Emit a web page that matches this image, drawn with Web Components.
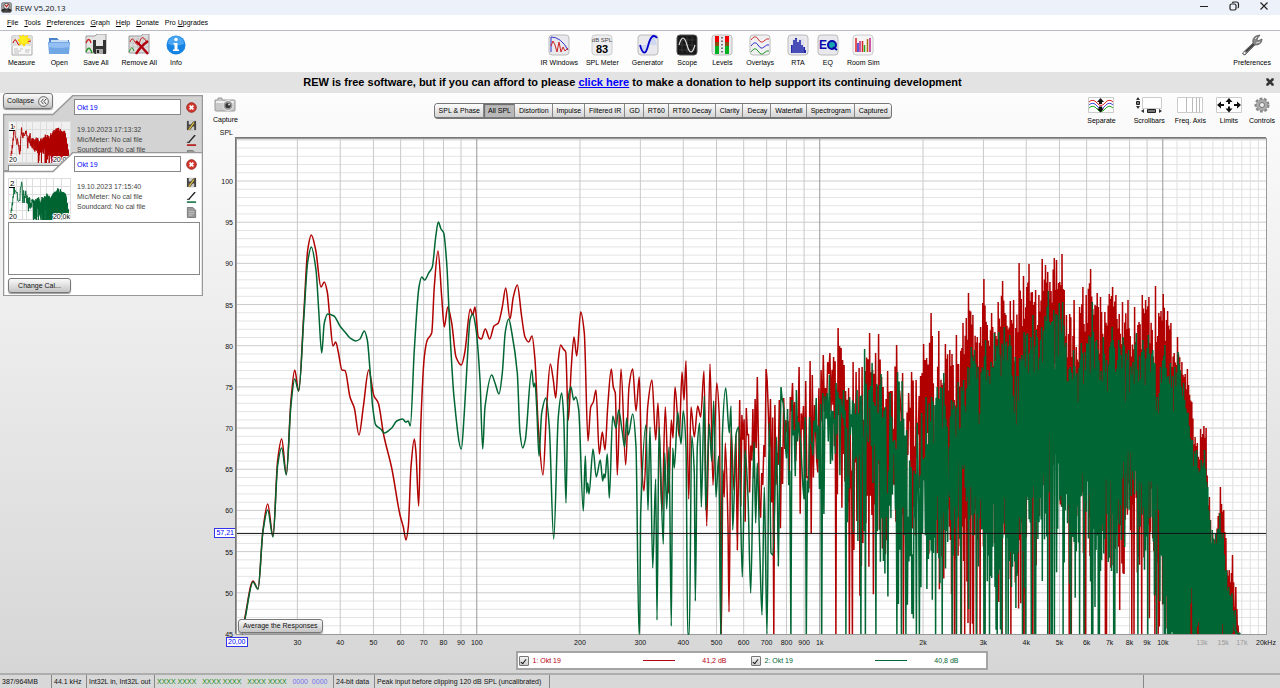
<!DOCTYPE html>
<html lang="en">
  <head>
    <meta charset="UTF-8" />
    <meta name="viewport" content="width=device-width, initial-scale=1.0" />
    <title>REW V5.20.13</title>
    <style>
      html,
      body {
        height: 100%;
        margin: 0;
      }

      body {
        font: 7px/10px "Liberation Sans", Arial, sans-serif;
        color: #111;
        overflow: hidden;
      }
    </style>
  </head>
  <body>
    <rew-app></rew-app>

    <script>
      const ICONS = {
        app: [16, 16, `<rect x="1" y="1" width="14" height="14" rx="2" fill="#aaa" stroke="#555"/><path d="M2 10h12v5H2z" fill="#444"/><circle cx="8" cy="6" r="4" fill="#eee" stroke="#333"/><path d="M6 4l2 3 3-4" fill="none" stroke="#b11" stroke-width="1.500"/><path d="M1 13l5-3M15 13l-5-3" stroke="#222" stroke-width="2"/>`],
        min: [12, 12, `<path d="M2 6.500h8" stroke="#222" fill="none"/>`],
        restore: [12, 12, `<rect x="2" y="4" width="6" height="6" rx="1.500" fill="none" stroke="#222" stroke-width="1.200"/><path d="M4.500 3q0-1 1.500-1h2.500q2 0 2 2v2.500q0 1.500-1 1.500" fill="none" stroke="#222" stroke-width="1.200"/>`],
        close: [12, 12, `<path d="M2.500 2.500l7 7M9.500 2.500l-7 7" stroke="#222" stroke-width="1.200"/>`],
        measure: [22, 22, `<path d="M1 2h20v19H1z" fill="#f7f7f7" stroke="#aaa"/><path d="M1 2h20v10H1z" fill="#ddd"/><path d="M1 7h20M6 2v10M11 2v10M16 2v10" stroke="#fff" stroke-width=".6"/><path d="M2 9q2-6 4-1t3 2 3-2 4 0 4-1" fill="none" stroke="#c00"/><path d="M3 15h4M9 15h3M3 17h7M3 19h5M14 16h5M14 18h4" stroke="#aaa" stroke-width=".7"/><path d="M12 0l1.500 2.500L17 1l-.5 3 3.500 1-3 2 1.500 3-3.500-.5L13 13l-2-3-3 1.500.5-3.500L6 6l3-1.500L8 1l3 1.500z" fill="#ffd900"/><circle cx="12.500" cy="6" r="4" fill="#ffee20"/>`],
        open: [22, 22, `<path d="M1 4h8l2 2h10v13H1z" fill="#4b82c8"/><path d="M3 6h17v6H3z" fill="#c7dcf5"/><path d="M0 8h22l-1 12H1z" fill="#72a7e6"/><path d="M1 9h20v4Q12 15 1 13z" fill="#94bff2"/>`],
        saveall: [22, 22, `<path d="M1 2h9l2-2h9v19H1z" fill="#e4e4e4" stroke="#999"/><path d="M1 9q3-7 5 0" fill="none" stroke="#c22" stroke-width="1.300"/><path d="M1 18q3-8 6 1" fill="none" stroke="#292" stroke-width="1.300"/><path d="M8 6h13v14H10l-2-2z" fill="#333"/><path d="M11 6h7v6h-7z" fill="#e8e8e8"/><path d="M11 15h7v5h-7z" fill="#aaa"/><path d="M12 16h2v3h-2z" fill="#222"/>`],
        removeall: [22, 22, `<path d="M1 2h12l2-2h6v19H1z" fill="#dedede" stroke="#999"/><path d="M1 5h20M1 9h20M1 13h20M5 2v16M10 2v16M15 2v16" stroke="#b5b5b5" stroke-width=".6"/><path d="M2 8q2-6 5 0t5-1 6 0" fill="none" stroke="#c22"/><path d="M1 18q3-8 5-1" fill="none" stroke="#292"/><path d="M8 7Q14 13 20 20M20 7Q12 13 8 20" stroke="#b00010" stroke-width="2.400" fill="none"/>`],
        info: [22, 22, `<circle cx="11" cy="11" r="9.500" fill="#1684e2"/><path d="M3 10a8 8 0 0 1 16 0q-8 3-16 0" fill="#4aa5f2"/><circle cx="11" cy="5.500" r="1.700" fill="#fff"/><path d="M8.500 9h4v6.500h1.500v1.500H8v-1.500h1.500v-5h-1z" fill="#fff"/>`],
        ir: [22, 22, `<rect x="1" y="1" width="20" height="20" rx="3" fill="#e9e9ed" stroke="#bbb"/><path d="M3 18V3q10 0 17 13" fill="none" stroke="#33c"/><path d="M3 12l2-5 2 4 2 7 2-10 2 10 2-5 2 4 3-3" fill="none" stroke="#c22"/>`],
        spl: [22, 22, `<rect x="1" y="1" width="20" height="20" rx="3" fill="#eeeef0" stroke="#ccc"/><text x="11" y="8" font-size="6" text-anchor="middle" fill="#444">dB SPL</text><text x="11" y="19" font-size="11" font-weight="bold" text-anchor="middle" fill="#000">83</text>`],
        generator: [22, 22, `<rect x="1" y="1" width="20" height="20" rx="3" fill="#e9e9ed" stroke="#bbb"/><path d="M3 11h17q-4-17-8 0-4 14-9 0" fill="#cfd6ef"/><path d="M3 11c3 11 6 9 8 1s5-13 9-8" fill="none" stroke="#00c" stroke-width="1.800"/>`],
        scope: [22, 22, `<rect x="1" y="1" width="20" height="20" rx="3" fill="#181818" stroke="#555"/><path d="M3 6h16M3 11h16M3 16h16M6 3v16M11 3v16M16 3v16" stroke="#444" stroke-width=".7"/><path d="M3 11q4-14 8 0t8 0" fill="none" stroke="#ddd" stroke-width="1.200"/>`],
        levels: [22, 22, `<rect x="1" y="1" width="20" height="20" rx="3" fill="#e9e9ed" stroke="#bbb"/><path d="M4 2h4v6H4zM14 2h4v6h-4z" fill="#e00"/><path d="M4 8h4v4H4zM14 8h4v4h-4z" fill="#884a10"/><path d="M4 12h4v8H4zM14 12h4v8h-4z" fill="#00b020"/><path d="M11 3v17" stroke="#777" stroke-width="2" stroke-dasharray="1.500 2"/>`],
        overlays: [22, 22, `<rect x="1" y="1" width="20" height="20" rx="3" fill="#f0f0f2" stroke="#bbb"/><path d="M2 6q4-6 7-1t6 2 5-2" fill="none" stroke="#c33"/><path d="M2 12q4-6 7-1t6 2 5-2" fill="none" stroke="#33c"/><path d="M2 18q4-6 7-1t6 2 5-2" fill="none" stroke="#292"/>`],
        rta: [22, 22, `<rect x="1" y="1" width="20" height="20" rx="3" fill="#e9e9ed" stroke="#bbb"/><path d="M4 19v-8h2V6h2V4h2v4h2V6h2v5h2v2h2v3h1v3z" fill="#2528a8"/><path d="M6 5v14M8 5v14M10 5v14M12 5v14M14 5v14M16 5v14" stroke="#b8bce8" stroke-width=".5"/>`],
        eq: [22, 22, `<rect x="1" y="1" width="20" height="20" rx="3" fill="#e9e9ed" stroke="#bbb"/><text x="2" y="15" font-size="12" font-weight="bold" fill="#0a0aae">E</text><circle cx="15" cy="11" r="4" fill="#16a7b0" stroke="#0a0aae" stroke-width="2"/><path d="M16 13l4 3" stroke="#0a0aae" stroke-width="2"/>`],
        room: [22, 22, `<rect x="1" y="1" width="20" height="20" rx="3" fill="#f5f5f5" stroke="#ccc"/><path d="M4 4v14M10.500 7v11" stroke="#d22" stroke-width="1.500"/><path d="M6 9v9" stroke="#2828d0" stroke-width="1.500"/><path d="M8 7v11M18 4v14" stroke="#c0208a" stroke-width="1.500"/><path d="M12.500 11v7" stroke="#2a2" stroke-width="1.500"/><path d="M15.500 5v13" stroke="#b06c10" stroke-width="1.500"/>`],
        wrench: [22, 22, `<path d="M1.500 19L12 9q-1-5 3-7l4-1-3 4 1 2 4-2q0 6-7 6L4 21q-2 0-2.500-2z" fill="#888" stroke="#555" stroke-width=".8"/><path d="M5 17.500L13 10" stroke="#333" stroke-width="1.500"/><path d="M14 5l2-2M15 9l4-1" stroke="#ddd"/><circle cx="3.500" cy="19" r="1" fill="#fff"/>`],
        camera: [22, 15, `<path d="M1 3h3V1h4v2h12q1 0 1 1v9q0 1-1 1H2q-1 0-1-1z" fill="#c9c9c9" stroke="#999"/><path d="M2 4h18v2H2z" fill="#eee"/><circle cx="14" cy="8.500" r="5" fill="#999" stroke="#eee"/><circle cx="14" cy="8.500" r="2.600" fill="#333"/><circle cx="15" cy="7.500" r="1" fill="#ddd"/>`],
        separate: [26, 16, `<path d="M.5.5h25v15H.5z" fill="#fff" stroke="#ccc"/><path d="M1 5q4-4 8 1t8 0 8-1" fill="none" stroke="#d22"/><path d="M1 8q4-4 8 1t8 0 8-1" fill="none" stroke="#44d"/><path d="M1 11q4-4 8 1t8 0 8-1" fill="none" stroke="#2a2"/><path d="M12.500 1l3.500 4h-2v2h-3V5H9zM12.500 15.500l3.500-4h-2v-2h-3v2H9z" fill="#111"/>`],
        scrollbars: [26, 16, `<path d="M6.500.5h19v11h-19z" fill="#fff" stroke="#ccc"/><path d="M0 3l2-3 2 3zM0 9l2 3 2-3zM8 12v4l-3-2zM23 12v4l3-2z" fill="#333"/><path d="M.5 4.500h3v3h-3zM11.500 12.500h8v3h-8z" fill="#777" stroke="#222"/>`],
        freq: [26, 16, `<path d="M.5.5h25v15H.5z" fill="#fff" stroke="#ccc"/><path d="M9.500 1v14M15.500 1v14M19.500 1v14M22.500 1v14" stroke="#bbb"/>`],
        limits: [26, 16, `<path d="M.5.5h25v15H.5z" fill="#fff" stroke="#ccc"/><path d="M13 1l3.500 4H14v2h-2V5H9.500zM13 15.500l3.500-4H14v-2h-2v2H9.500zM1 8l4-3.500V7h3v2H5v2.500zM25 8l-4-3.500V7h-3v2h3v2.500z" fill="#111"/>`],
        gear: [18, 16, `<circle cx="9" cy="8" r="6" fill="#999" stroke="#888" stroke-width="3" stroke-dasharray="2.700 1.500"/><circle cx="9" cy="8" r="5.500" fill="#aaa"/><circle cx="9" cy="8" r="2.500" fill="#eee" stroke="#777"/>`],
        cross: [10, 10, `<path d="M2 2l6 6M8 2l-6 6" stroke="#333" stroke-width="2.600"/><path d="M1 2h2M7 2h2M1 8h2M7 8h2" stroke="#333"/>`],
        remove: [12, 12, `<circle cx="6" cy="6" r="5.200" fill="#d43a30" stroke="#961a14"/><path d="M4 4l4 4M8 4l-4 4" stroke="#fff" stroke-width="2"/>`],
        save: [12, 12, `<path d="M1 1h10v10H1z" fill="#444"/><path d="M3 1h6v4H3zM3 7h6v4H3z" fill="#ccc"/><path d="M2 10l6-8 2 1-6 8" fill="#d8b840" stroke="#222" stroke-width=".7"/>`],
        colour: [12, 12, `<path d="M3 8l7-8" stroke="#222" stroke-width="1.500"/><path d="M1 8h3" stroke="#222"/><path d="M1 11h10" stroke="var(--trace)" stroke-width="1.600"/>`],
        notes: [12, 12, `<path d="M1.500.5h6l3 3v8h-9z" fill="#999" stroke="#777"/><path d="M3 5h6M3 7h6M3 9h4" stroke="#ccc" stroke-width=".8"/>`],
        chevrons: [12, 12, `<circle cx="6" cy="6" r="5.300" fill="#f4f4f4" stroke="#444" stroke-width=".9"/><path d="M6 3L3.500 6 6 9M9 3L6.500 6 9 9" fill="none" stroke="#333"/>`],
      };

      // Trace vertices on the 1029 x 495 plot, whose origin is 237,139
      const RED_LOW = [
        242,634, 245,617, 253,581, 258,589, 263,530, 267.7,504, 273,536, 277.7,460, 281.7,439, 286.3,474, 291,400,
        294.7,370, 298.7,391, 304,310, 307.7,250, 311.3,235, 315.7,250, 321,287, 324.3,282, 327.3,292, 330,320,
        333,346, 335.7,342, 338.3,352, 342,370, 345,370.5, 350,397, 354.3,408, 359,435, 363.3,407, 368.7,370,
        374,396, 378.3,403, 383.7,435, 391.7,468, 400,515, 403.3,527, 406,540, 408.3,527, 411,467, 414.3,439,
        416,453, 418.7,506, 420.7,427, 424.3,357, 427.3,340, 431.7,333, 434.3,287, 438,251, 441.7,297, 444.3,327,
        447.7,307, 451.7,323, 456,357, 461.3,365, 464.7,353, 470.3,309, 472.7,315, 475,307, 478.3,337, 481.3,339,
        485.3,329, 489.7,339, 494,326, 498.3,323, 502.3,307, 505.7,288, 510,319, 513.3,297, 517.3,285, 521.7,317,
        525,337, 528.7,342, 532,336, 535,360, 538.3,427, 543,475, 546.7,407, 550.3,364, 553.3,380, 555.7,398,
        558.3,360, 560.7,345, 563.3,349, 565.7,352, 568.3,420, 571.3,367, 574,337, 576.7,356, 580.7,312, 584.3,333,
        588,441, 590.7,407, 593.3,402, 596,390, 599.3,454, 602.3,432, 605,450, 607.7,407, 611.3,369, 613.3,387,
        615.3,393, 617.3,475, 621,369, 625.7,465, 629,387, 632.7,369, 636,411, 639.3,377, 641.7,467, 644,491,
        647.7,407, 652,380, 655.7,440, 658,403, 662,511, 665.3,407, 668.7,493, 671.3,420, 673,438, 675,387,
        679.3,437, 682,372, 684,400, 686,361, 688.7,499, 691,407, 694.3,437, 697.7,406, 700.7,417, 704,371,
        706.7,526, 710,364, 713,485, 716.7,383, 719.3,417, 721.3,634, 723,470, 724.3,497, 725.3,443, 728,526,
        729,612, 731,430, 734,490, 736,435, 737.3,550,
      ];
      const GREEN_LOW = [
        242,634, 245,619, 253,582, 258,589, 263,531, 267.7,510, 273,537, 277.7,465, 281.7,448, 286.3,475, 291,405,
        294.7,379, 298.7,391, 304,315, 307.7,262, 311.3,247, 316,270, 318.7,310, 321.7,353, 324.3,323, 327.7,314,
        334,316, 340,326, 345,332, 350,338, 355.7,341, 360,339, 364.3,331, 367.3,340, 370,370, 372.7,407, 375.7,425,
        380.7,429, 384.3,433, 391.7,428, 396.7,421, 402.7,419, 405.7,422, 408.3,421, 410.3,426, 414.3,350, 419,287,
        421.7,277, 424.7,280, 428.7,273, 432.3,267, 435.7,237, 438.3,222, 441,229, 443.7,233, 446.7,263, 450,333,
        454,397, 461.3,449, 464.3,413, 467.7,353, 470,320, 472.7,314, 475.7,327, 480,380, 482.7,449, 485,407,
        491.7,375, 495,383, 499,394, 502.3,373, 505.3,332, 508.7,319, 511.7,332, 517.3,373, 520,433, 522.7,448,
        525.3,440, 531.7,370, 533.7,387, 535,383, 536.7,407, 539,456, 541.7,413, 546,398, 549.3,427, 553.7,539,
        558.3,417, 561.7,393, 563.7,417, 566,503, 568,400, 571,387, 573.7,400, 575.7,397, 578.7,410, 583.3,511,
        585.3,456, 586.7,493, 587.7,483, 589,494, 593,449, 596.3,477, 600.3,460, 602.7,481, 604,474, 605,478,
        607.3,454, 609.3,498, 612.7,416, 616,428, 618.7,410, 622,430, 624.7,447, 626.7,418, 628.3,435, 632.7,414,
        636,447, 639,634, 639.6,634, 640.7,513, 646,425, 648,510, 650,427, 652.7,568, 655.7,479, 657,620, 659,427,
        663.3,544, 664.7,453, 666.7,509, 669,447, 671.3,626, 672.7,448, 674.3,468, 677.7,412, 681,444, 683.3,411,
        686,448, 687.7,634, 689.3,634, 691.7,436, 694.3,473, 695.3,601, 697.3,447, 699.7,423, 701.3,507, 704.3,396,
        705.7,510, 709.3,424, 711.7,461, 713.7,401, 716,497, 718.7,456, 720.7,634, 722.3,437, 725.7,388, 729.3,433,
        731,406, 732.7,530, 736.3,433, 738.7,427, 742.3,577, 745,450, 748,497, 750.7,593, 754,442, 755.7,523,
        757.3,463, 759.7,547, 762,615, 764.3,487, 767,634, 769.3,423, 771,553, 773,555, 776.7,437, 778.3,566,
      ];
      // Peak outlines of the dense part
      const RED_PEAKS = [
        739.7,400, 742.7,415, 745.3,408, 748.3,434, 752,409, 756.3,377, 760.7,473, 764.3,445, 767,369, 771,399,
        774.3,405, 780,400, 784,398, 789.7,397, 792.7,383, 795.7,402, 799.3,367, 802.7,406, 806,381, 809.7,361,
        812.7,375, 815,405, 821,370, 824.3,355, 827.3,362, 830.7,353, 833.3,357, 837.7,328, 841.7,348, 844.7,365,
        848.3,388, 853.7,362, 859,368, 862.7,367, 869,333, 873.3,370, 876.3,353, 879,334, 883.3,387, 888.3,371,
        891.3,391, 896.7,345, 903.3,373, 908.3,393, 912,372, 916.7,380, 920,376, 923,344, 925.7,360, 930.7,313,
        932.7,336, 935,407, 939,331, 942,385, 945.7,344, 949.3,350, 952,354, 956,335, 958.7,364, 963,323, 966.3,318,
        968.7,293, 973.3,315, 977.3,337, 980.7,327, 984,279, 986.7,325, 991.7,313, 995,332, 998.7,302, 1002.7,281,
        1006,315, 1010.7,301, 1013.3,300, 1016,328, 1019,263, 1023.3,276, 1026.7,287, 1029.3,264, 1032.3,292,
        1035.3,290, 1039.3,295, 1042.7,259, 1045.3,265, 1047.3,272, 1050,282, 1054,258, 1057,260, 1059.3,282,
        1062.3,254, 1064.3,290, 1066.7,315, 1069.3,314, 1073.7,300, 1076.7,347, 1079.3,307, 1083,287, 1086,295,
        1091,269, 1095,305, 1097.7,293, 1100.7,297, 1104.7,312, 1109.3,294, 1112.7,287, 1116,295, 1122,302,
        1127.7,300, 1130,336, 1135,307, 1139,322, 1142,295, 1145.3,300, 1149,297, 1152.7,330, 1156,286, 1159.3,313,
        1162.7,294, 1167.3,311, 1171,323, 1174,353, 1178,337, 1182,362, 1187,369, 1189,385, 1192.3,402, 1194.7,437,
        1197.7,443, 1200.7,429, 1203.7,426, 1205.7,428, 1209,497, 1212.3,533, 1216,533, 1220,487, 1223.3,510,
        1226,538, 1229.3,570, 1233,555, 1234.7,607, 1236.3,587, 1239.3,633,
      ];
      const GREEN_PEAKS = [
        781,387, 783,403, 791.7,400, 797.3,390, 801,443, 805,417, 810,417, 816.7,398, 822.7,393, 829,375, 836.7,383,
        843.3,390, 850,397, 856.7,390, 865,349, 869,390, 872.3,363, 881,374, 885,407, 890,393, 894.7,440, 898,372,
        901.7,381, 906,430, 911.7,467, 916.7,423, 921.7,413, 926.7,397, 931.7,397, 937.7,387, 944,373, 947.3,427,
        951.7,400, 958.3,382, 963.3,380, 968.3,367, 971,347, 975,350, 978.3,367, 986,340, 988.3,370, 994,333,
        998.3,332, 1004,327, 1010,335, 1015,357, 1019.3,358, 1024.3,332, 1032.7,315, 1036.7,330, 1041.7,327,
        1048.7,291, 1053.3,310, 1059.3,303, 1062.7,302, 1065.7,343, 1070,367, 1074,350, 1077.3,373, 1081.7,343,
        1086.7,343, 1092.3,302, 1096.7,340, 1103.3,337, 1106.7,360, 1111.7,327, 1118.3,340, 1123.3,337, 1129,350,
        1136.7,333, 1143.3,340, 1148.3,335, 1153.3,350, 1160,367, 1164.7,345, 1170,363, 1175,367, 1178.3,352,
        1184,383, 1188.3,413, 1192.3,440, 1196.7,450, 1201.7,460, 1205,450, 1207.7,487, 1211.7,530, 1215,533,
        1220,513, 1223.3,533, 1226.7,570, 1231.7,593, 1235,610, 1239.3,634,
      ];
      const RED_FLOOR = [738,440, 780,430, 830,430, 880,470, 930,500, 1000,500, 1050,440, 1100,500, 1170,520, 1185,600, 1195,634, 1240,634];
      const GREEN_FLOOR = [780,425, 830,430, 870,460, 905,520, 960,505, 1000,520, 1020,540, 1044,455, 1053,445, 1062,520, 1085,530, 1110,500, 1150,515, 1165,550, 1178,610, 1186,634, 1240,634];

      const toPoints = (flat) => {
        const points = [];
        for (let i = 0; i < flat.length; i += 2) points.push([flat[i], flat[i + 1]]);
        return points;
      };

      const random = (seed) => () => {
        seed = (seed * 1664525 + 1013904223) % 4294967296;
        return seed / 4294967296;
      };

      const valueAt = (points, x) => {
        let i = 1;
        while (i < points.length - 1 && points[i][0] < x) i++;
        const [x0, y0] = points[i - 1];
        const [x1, y1] = points[i];
        const t = Math.min(1, Math.max(0, (x - x0) / (x1 - x0)));
        return y0 + (y1 - y0) * t;
      };

      // Monotone cubic through the vertices, so that every peak keeps its height
      const smoothPath = (points) => {
        const slope = points.map((p, i) => {
          if (i === 0 || i === points.length - 1) return 0;
          const a = (p[1] - points[i - 1][1]) / (p[0] - points[i - 1][0]);
          const b = (points[i + 1][1] - p[1]) / (points[i + 1][0] - p[0]);
          return a * b <= 0 ? 0 : (2 * a * b) / (a + b);
        });
        let d = `M${points[0]}`;
        for (let i = 1; i < points.length; i++) {
          const [x0, y0] = points[i - 1];
          const [x1, y1] = points[i];
          const h = (x1 - x0) / 3;
          d += `C${(x0 + h).toFixed(1)} ${(y0 + slope[i - 1] * h).toFixed(1)} ${(x1 - h).toFixed(1)} ${(y1 - slope[i] * h).toFixed(1)} ${x1} ${y1}`;
        }
        return d;
      };

      const densePath = (peaks, floor, seed, fullChance) => {
        const next = random(seed);
        let d = "";
        let x = peaks[0][0];
        let drift = 0;
        while (x < 1240) {
          const step = x < 830 ? 2.2 : x < 930 ? 1.5 : 1.1;
          const peak = peaks.find((p) => Math.abs(p[0] - x) < step / 2);
          const dip = x < 960 ? 110 : x < 1180 ? 65 : 25;
          const top = Math.min(633, peak ? peak[1] : valueAt(peaks, x) + 6 + next() * next() * dip);
          drift = drift * 0.8 + (next() - 0.5) * 70;
          let bottom = valueAt(floor, x) + drift + Math.pow(next(), 2) * 120 - 15;
          if (next() < (x < 900 ? fullChance / 2 : fullChance)) bottom = 640;
          bottom = Math.min(634, Math.max(top + 12, bottom));
          d += `L${x.toFixed(1)} ${top.toFixed(1)}`;
          d += `L${(x + step / 2).toFixed(1)} ${bottom.toFixed(1)}`;
          x += step;
        }
        return d;
      };

      const TRACES = {
        red: {
          colour: "#b00000",
          path: smoothPath(toPoints(RED_LOW)) + densePath(toPoints(RED_PEAKS), toPoints(RED_FLOOR), 7, 0.08),
        },
        green: {
          colour: "#006633",
          path: smoothPath(toPoints(GREEN_LOW)) + densePath(toPoints(GREEN_PEAKS), toPoints(GREEN_FLOOR), 21, 0.18),
        },
      };

      const BUTTON_CSS = `
        button {
          box-sizing: border-box;
          font: inherit;
          color: inherit;
          border: 1px solid #777;
          border-radius: 3px;
          background: linear-gradient(#fafafa, #c4c4c4);
          box-shadow: 0 1px 1px #999;
          padding: 0 4px;
        }
      `;

      class RewElement extends HTMLElement {
        constructor() {
          super();
          this.attachShadow({ mode: "open" });
        }

        connectedCallback() {
          this.shadowRoot.innerHTML = `<style>${this.styles()}</style>${this.template()}`;
        }
      }

      class RewIcon extends RewElement {
        styles() {
          return `:host { display: inline-block; } svg { display: block; }`;
        }

        template() {
          const [w, h, body] = ICONS[this.getAttribute("name")];
          const size = Number(this.getAttribute("size")) || w;
          return `<svg width="${size}" height="${Math.round((size * h) / w)}" viewBox="0 0 ${w} ${h}" aria-hidden="true">${body}</svg>`;
        }
      }

      class ToolButton extends RewElement {
        styles() {
          return `
            :host { display: block; }
            button {
              display: flex;
              flex-direction: column;
              align-items: center;
              gap: var(--tool-gap, 2px);
              padding: 0;
              border: 0;
              background: none;
              font: inherit;
              color: #000;
              white-space: nowrap;
            }
          `;
        }

        template() {
          return `<button type="button"><rew-icon name="${this.getAttribute("icon")}"></rew-icon><span><slot></slot></span></button>`;
        }
      }

      class TitleBar extends RewElement {
        styles() {
          return `
            :host { display: flex; align-items: center; height: 15px; padding: 0 10px 0 1px; background: #edf2fa; }
            h1 { flex: 1; margin: 0 0 0 3px; font: 8px/15px "Open Sans", sans-serif; color: #111; }
            div { display: flex; gap: 18px; }
            button { padding: 0; border: 0; background: none; }
          `;
        }

        template() {
          return `
            <rew-icon name="app" size="11"></rew-icon>
            <h1>REW V5.20.13</h1>
            <div>
              <button aria-label="Minimise"><rew-icon name="min"></rew-icon></button>
              <button aria-label="Restore"><rew-icon name="restore"></rew-icon></button>
              <button aria-label="Close"><rew-icon name="close"></rew-icon></button>
            </div>
          `;
        }
      }

      class MenuBar extends RewElement {
        styles() {
          return `
            :host { display: block; background: #fff; border-bottom: 1px solid #b9bbc8; }
            nav { display: flex; gap: 6px; height: 15px; align-items: center; padding-left: 7px; }
            button { padding: 0; border: 0; background: none; font: inherit; color: #000; }
          `;
        }

        template() {
          return `
            <nav>
              <button><u>F</u>ile</button>
              <button><u>T</u>ools</button>
              <button><u>P</u>references</button>
              <button><u>G</u>raph</button>
              <button><u>H</u>elp</button>
              <button><u>D</u>onate</button>
              <button>Pro <u>U</u>pgrades</button>
            </nav>
          `;
        }
      }

      class MainToolbar extends RewElement {
        styles() {
          return `
            :host { display: flex; justify-content: space-between; height: 38px; padding: 3px 9px 0 8px; background: #fdfdfd; }
            div { display: flex; gap: 13px; }
            .near { margin-left: -5px; }
          `;
        }

        template() {
          return `
            <div>
              <tool-button icon="measure">Measure</tool-button>
              <tool-button icon="open">Open</tool-button>
              <tool-button icon="saveall">Save All</tool-button>
              <tool-button icon="removeall">Remove All</tool-button>
              <tool-button icon="info" class="near">Info</tool-button>
            </div>
            <div>
              <tool-button icon="ir">IR Windows</tool-button>
              <tool-button icon="spl" class="near">SPL Meter</tool-button>
              <tool-button icon="generator">Generator</tool-button>
              <tool-button icon="scope">Scope</tool-button>
              <tool-button icon="levels">Levels</tool-button>
              <tool-button icon="overlays">Overlays</tool-button>
              <tool-button icon="rta">RTA</tool-button>
              <tool-button icon="eq" class="near">EQ</tool-button>
              <tool-button icon="room" class="near">Room Sim</tool-button>
            </div>
            <tool-button icon="wrench">Preferences</tool-button>
          `;
        }
      }

      class DonateBanner extends RewElement {
        styles() {
          return `
            :host { display: flex; align-items: center; height: 21px; padding: 0 5px 0 0; background: #e3e3e3; }
            p { flex: 1; margin: 0; text-align: center; font-size: 11px; line-height: 21px; font-weight: bold; color: #000; }
            a { color: #00f; }
            button { padding: 0; border: 0; background: none; }
          `;
        }

        template() {
          return `
            <p>REW is free software, but if you can afford to please <a href="#donate">click here</a> to make a donation to help support its continuing development</p>
            <button aria-label="Close"><rew-icon name="cross"></rew-icon></button>
          `;
        }
      }

      class MeasurementCard extends RewElement {
        styles() {
          return `
            :host { display: block; position: relative; box-sizing: border-box; padding: 4px 3px 3px 5px; overflow: hidden; --card: #fff; }
            :host([dimmed]) { --card: #d3d3d3; height: 76px; }
            .edge { position: absolute; inset: 0; width: 100%; height: 100%; }
            .content { position: relative; }
            .head { display: grid; grid-template-columns: 63px 107px 14px; column-gap: 3px; grid-template-rows: 22px 42px; height: 66px; }
            input {
              box-sizing: border-box; grid-column: 2; height: 16px; padding: 0 2px;
              border: 1px solid #888; font: inherit; color: #00f; background: #fff;
            }
            .thumb { grid-column: 1; grid-row: 2; width: 63px; height: 42px; background: #fff; }
            :host([dimmed]) .thumb { background: #f0f0f0; }
            .meta { grid-column: 2; grid-row: 2; margin: 0; padding: 4px 0 0 3px; color: #444; }
            .icons { grid-column: 3; grid-row: 1 / 3; display: flex; flex-direction: column; gap: 4px; padding: 3px 0 0 2px; }
            .icons button { display: flex; padding: 0; border: 0; background: none; box-shadow: none; }
            .icons button:first-child { margin-bottom: 3px; }
            textarea { display: block; box-sizing: border-box; width: 100%; height: 53px; margin: 0; border: 1px solid #888; resize: none; }
            ${BUTTON_CSS}
            .cal { width: 63px; height: 15px; margin-top: 3px; line-height: 13px; }
          `;
        }

        template() {
          const trace = TRACES[this.getAttribute("trace")];
          return `
            <svg class="edge" aria-hidden="true">
              <path d="M.5 600V19.500H50L70 .5H199.500V600" fill="var(--card)" stroke="#999" stroke-width="1.500"/>
              <line x1="0" x2="100%" y1="100%" y2="100%" stroke="#999" stroke-width="2"/>
            </svg>
            <div class="content" style="--trace: ${trace.colour}">
              <div class="head">
                <input type="text" value="Okt 19" aria-label="Measurement name" />
                <svg class="thumb" aria-hidden="true">
                  <path d="M0 .5H63M0 8.500H63M0 16.500H63M0 24.500H63M0 32.500H63M0 41.500H63M.5 0V42M8.500 0V42M14.500 0V42M18.500 0V42M24.500 0V42M32.500 0V42M38.500 0V42M45.500 0V42M53.500 0V42M62.500 0V42" stroke="#ddd"/>
                  <svg width="63" height="42" viewBox="210 180 1060 454" preserveAspectRatio="none">
                    <path d="${trace.path}" fill="none" stroke="${trace.colour}" vector-effect="non-scaling-stroke"/>
                  </svg>
                  <text x="2" y="8" font-size="8" stroke="#fff" stroke-width="2" paint-order="stroke">${this.getAttribute("number")}</text>
                  <path d="M1 9.500h6" stroke="#000"/>
                  <text x="1" y="41" font-size="7" stroke="#fff" stroke-width="2" paint-order="stroke">20</text>
                  <text x="62" y="41" font-size="7" text-anchor="end" stroke="#fff" stroke-width="2" paint-order="stroke">20,0k</text>
                </svg>
                <p class="meta"><slot></slot></p>
                <div class="icons">
                  <button aria-label="Remove"><rew-icon name="remove" size="11"></rew-icon></button>
                  <button aria-label="Save"><rew-icon name="save" size="11"></rew-icon></button>
                  <button aria-label="Trace colour"><rew-icon name="colour" size="11"></rew-icon></button>
                  <button aria-label="Notes"><rew-icon name="notes" size="11"></rew-icon></button>
                </div>
              </div>
              <textarea aria-label="Notes"></textarea>
              ${this.hasAttribute("dimmed") ? "" : `<button class="cal" type="button">Change Cal...</button>`}
            </div>
          `;
        }
      }

      class MeasurementList extends RewElement {
        styles() {
          return `
            :host { display: block; position: relative; padding: 2px 2px 0 3px; }
            measurement-card + measurement-card { margin-top: -19px; }
            ${BUTTON_CSS}
            .collapse {
              position: absolute; left: 3px; top: 0; z-index: 1; display: flex; align-items: center;
              gap: 4px; height: 16px; padding: 0 3px;
            }
          `;
        }

        template() {
          return `
            <button class="collapse" type="button">Collapse <rew-icon name="chevrons" size="11"></rew-icon></button>
            <measurement-card dimmed number="1" trace="red">19.10.2023 17:13:32<br />Mic/Meter: No cal file<br />Soundcard: No cal file</measurement-card>
            <measurement-card number="2" trace="green">19.10.2023 17:15:40<br />Mic/Meter: No cal file<br />Soundcard: No cal file</measurement-card>
          `;
        }
      }

      class GraphTabs extends RewElement {
        styles() {
          return `
            :host { display: flex; height: 16px; border: 1px solid #777; border-bottom-width: 2px; border-radius: 4px; overflow: hidden; box-sizing: border-box; }
            button {
              padding: 0 3px 0 4px; border: 0; border-right: 1px solid #888; font: inherit; color: #000; white-space: nowrap;
              background: linear-gradient(#fdfdfd, #d4d4d4);
            }
            button:last-child { border-right: 0; }
            button[aria-selected="true"] { background: #b9b9b9; box-shadow: inset 1px 1px 1px #666; }
          `;
        }

        template() {
          const tabs = ["SPL &amp; Phase", "All SPL", "Distortion", "Impulse", "Filtered IR", "GD", "RT60", "RT60 Decay", "Clarity", "Decay", "Waterfall", "Spectrogram", "Captured"];
          return tabs.map((tab) => `<button role="tab" aria-selected="${tab === "All SPL"}">${tab}</button>`).join("");
        }
      }

      const MAX_DB = 105.1;
      const MIN_DB = 45;
      const dbToPercent = (db) => `${(((MAX_DB - db) / (MAX_DB - MIN_DB)) * 100).toFixed(2)}%`;
      const hzToPercent = (hz) => `${((Math.log10(hz / 20) / 3) * 100).toFixed(2)}%`;

      class SplGraph extends RewElement {
        styles() {
          return `
            :host {
              flex: 1; min-height: 0; display: grid; padding-right: 14px;
              grid-template-columns: 32px 1fr; grid-template-rows: 15px 1fr 17px;
            }
            .unit { grid-column: 1; text-align: right; padding: 4px 4px 0 0; }
            svg { display: block; width: 100%; height: 100%; overflow: visible; }
            .levels { grid-column: 1; grid-row: 2; position: relative; }
            .levels text { text-anchor: end; }
            text { fill: #111; font-size: 7px; }
            .plot { grid-column: 2; grid-row: 2; position: relative; background: #fff; box-shadow: 0 0 0 1px #999, -1px -1px 0 1px #777; min-height: 0; }
            .plot > svg { position: absolute; inset: 0; }
            .freqs { grid-column: 2; grid-row: 3; position: relative; }
            .freqs text { text-anchor: middle; }
            .cursor {
              position: absolute; box-sizing: border-box; height: 10px; padding: 0 1px; line-height: 8px;
              border: 1px solid #33e; background: #fff; color: #00f;
            }
            ${BUTTON_CSS}
            .average { position: absolute; left: 1px; bottom: 1px; height: 14px; white-space: nowrap; }
          `;
        }

        grid() {
          let lines = "";
          for (let db = 46; db <= 105; db++) {
            const y = dbToPercent(db);
            lines += `<line x1="0" x2="100%" y1="${y}" y2="${y}" stroke="${db % 5 ? "#e4e4e4" : "#cbcbcb"}"/>`;
          }
          for (let decade = 10; decade <= 10000; decade *= 10) {
            for (let i = 1; i < 10; i++) {
              const hz = decade * i;
              if (hz <= 20 || hz >= 20000) continue;
              const x = hzToPercent(hz);
              lines += `<line x1="${x}" x2="${x}" y1="0" y2="100%" stroke="${i === 1 ? "#999" : "#c9c9c9"}"/>`;
            }
          }
          for (let k = 11; k < 20; k++) {
            const x = hzToPercent(k * 1000);
            lines += `<line x1="${x}" x2="${x}" y1="0" y2="100%" stroke="#e0e0e0"/>`;
          }
          return lines;
        }

        levelLabels() {
          let labels = "";
          for (let db = 45; db <= 100; db += 5) {
            labels += `<text x="28" y="${dbToPercent(db)}" dy="3">${db}</text>`;
          }
          return labels;
        }

        freqLabels() {
          const freqs = [30, 40, 50, 60, 70, 80, 90, 100, 200, 300, 400, 500, 600, 700, 800, 900, 1000, 2000, 3000, 4000, 5000, 6000, 7000, 8000, 9000, 10000, 13000, 15000, 17000, 20000];
          return freqs
            .map((hz) => {
              const label = hz === 20000 ? "20kHz" : hz >= 1000 ? `${hz / 1000}k` : hz;
              const faint = hz > 10000 && hz < 20000 ? ` style="fill: #999"` : "";
              return `<text x="${hzToPercent(hz)}" y="11"${faint}>${label}</text>`;
            })
            .join("");
        }

        template() {
          const cursor = dbToPercent(57.21);
          return `
            <span class="unit">SPL</span>
            <div class="levels">
              <svg>${this.levelLabels()}</svg>
              <span class="cursor" style="right: 1px; top: calc(${cursor} - 5px)">57,21</span>
            </div>
            <div class="plot">
              <svg>
                ${this.grid()}
                <svg width="100%" height="100%" viewBox="237 139 1029 495" preserveAspectRatio="none">
                  <path d="${TRACES.red.path}" fill="none" stroke="${TRACES.red.colour}" stroke-width="1.500" stroke-linejoin="bevel" vector-effect="non-scaling-stroke"/>
                  <path d="${TRACES.green.path}" fill="none" stroke="${TRACES.green.colour}" stroke-width="1.500" stroke-linejoin="bevel" vector-effect="non-scaling-stroke"/>
                </svg>
                <line x1="0" x2="100%" y1="${cursor}" y2="${cursor}" stroke="#111"/>
              </svg>
              <button class="average" type="button">Average the Responses</button>
            </div>
            <div class="freqs">
              <svg>${this.freqLabels()}</svg>
              <span class="cursor" style="left: -11px; top: 3px">20,00</span>
            </div>
          `;
        }
      }

      class TraceLegend extends RewElement {
        styles() {
          return `
            :host {
              display: grid; grid-template-columns: 232px 232px; box-sizing: border-box; width: 472px; height: 19px;
              padding-left: 1px; border: 2px solid #a4a4a4; background: #fff; align-items: center;
            }
            label { display: grid; grid-template-columns: 14px 110px 32px 52px; align-items: center; color: var(--trace); }
            hr { width: 100%; margin: 0; border: 0; border-top: 1px solid var(--trace); }
            output { text-align: right; }
            input {
              appearance: none; box-sizing: border-box; width: 10px; height: 10px; margin: 0; border: 1px solid #777; border-radius: 1px;
              background: linear-gradient(#f4f4f4, #ccc); display: grid; place-items: center;
            }
            input:checked::before {
              content: ""; width: 2px; height: 5px; border: solid #111; border-width: 0 1px 1px 0; transform: rotate(38deg);
            }
          `;
        }

        template() {
          return `
            <label style="--trace: #b80010"><input type="checkbox" checked /> <span>1: Okt 19</span><hr /><output>41,2 dB</output></label>
            <label style="--trace: #006633"><input type="checkbox" checked /> <span>2: Okt 19</span><hr /><output>40,8 dB</output></label>
          `;
        }
      }

      class GraphPanel extends RewElement {
        styles() {
          return `
            :host { flex: 1; min-width: 0; display: flex; flex-direction: column; --tool-gap: 3px; }
            header { display: flex; justify-content: space-between; align-items: flex-start; height: 27px; padding: 4px 5px 0 8px; }
            graph-tabs { margin-top: 6px; }
            .tools { display: flex; gap: 10px; }
            .tools :first-child { margin-right: 8px; }
            .tools :last-child { margin-left: -3px; }
            footer { display: flex; justify-content: center; padding: 0 14px 3px 32px; }
          `;
        }

        template() {
          return `
            <header>
              <tool-button icon="camera">Capture</tool-button>
              <graph-tabs role="tablist"></graph-tabs>
              <div class="tools">
                <tool-button icon="separate">Separate</tool-button>
                <tool-button icon="scrollbars">Scrollbars</tool-button>
                <tool-button icon="freq">Freq. Axis</tool-button>
                <tool-button icon="limits">Limits</tool-button>
                <tool-button icon="gear">Controls</tool-button>
              </div>
            </header>
            <spl-graph></spl-graph>
            <footer><trace-legend></trace-legend></footer>
          `;
        }
      }

      class StatusBar extends RewElement {
        styles() {
          return `
            :host {
              display: grid; grid-template-columns: 52px 35px 68px 179px 41px 175px 1fr 136px; box-sizing: border-box;
              height: 15px; border-top: 2px solid #adadad; background: #d8d8d8; line-height: 14px; white-space: pre;
            }
            span { padding-left: 2px; border-right: 1px solid #888; overflow: hidden; }
            span:last-child { border: 0; }
            b { font-weight: normal; color: #128a12; }
            i { font-style: normal; color: #7070ee; }
          `;
        }

        template() {
          return `<span>387/964MB</span><span>44.1 kHz</span><span>Int32L in, Int32L out</span><span><b>XXXX XXXX   XXXX XXXX   XXXX XXXX</b>   <i>0000  0000</i></span><span>24-bit data</span><span>Peak input before clipping 120 dB SPL (uncalibrated)</span><span></span><span></span>`;
        }
      }

      class RewApp extends RewElement {
        styles() {
          return `
            :host { display: flex; flex-direction: column; height: 100vh; background: #fff; }
            main { flex: 1; min-height: 0; display: flex; background: linear-gradient(#fcfcfc, #d6d6d6); }
            measurement-list { flex: none; width: 200px; }
          `;
        }

        template() {
          return `
            <title-bar></title-bar>
            <menu-bar></menu-bar>
            <main-toolbar></main-toolbar>
            <donate-banner></donate-banner>
            <main>
              <measurement-list></measurement-list>
              <graph-panel></graph-panel>
            </main>
            <status-bar></status-bar>
          `;
        }
      }

      customElements.define("rew-icon", RewIcon);
      customElements.define("tool-button", ToolButton);
      customElements.define("title-bar", TitleBar);
      customElements.define("menu-bar", MenuBar);
      customElements.define("main-toolbar", MainToolbar);
      customElements.define("donate-banner", DonateBanner);
      customElements.define("measurement-card", MeasurementCard);
      customElements.define("measurement-list", MeasurementList);
      customElements.define("graph-tabs", GraphTabs);
      customElements.define("spl-graph", SplGraph);
      customElements.define("trace-legend", TraceLegend);
      customElements.define("graph-panel", GraphPanel);
      customElements.define("status-bar", StatusBar);
      customElements.define("rew-app", RewApp);
    </script>
  </body>
</html>
